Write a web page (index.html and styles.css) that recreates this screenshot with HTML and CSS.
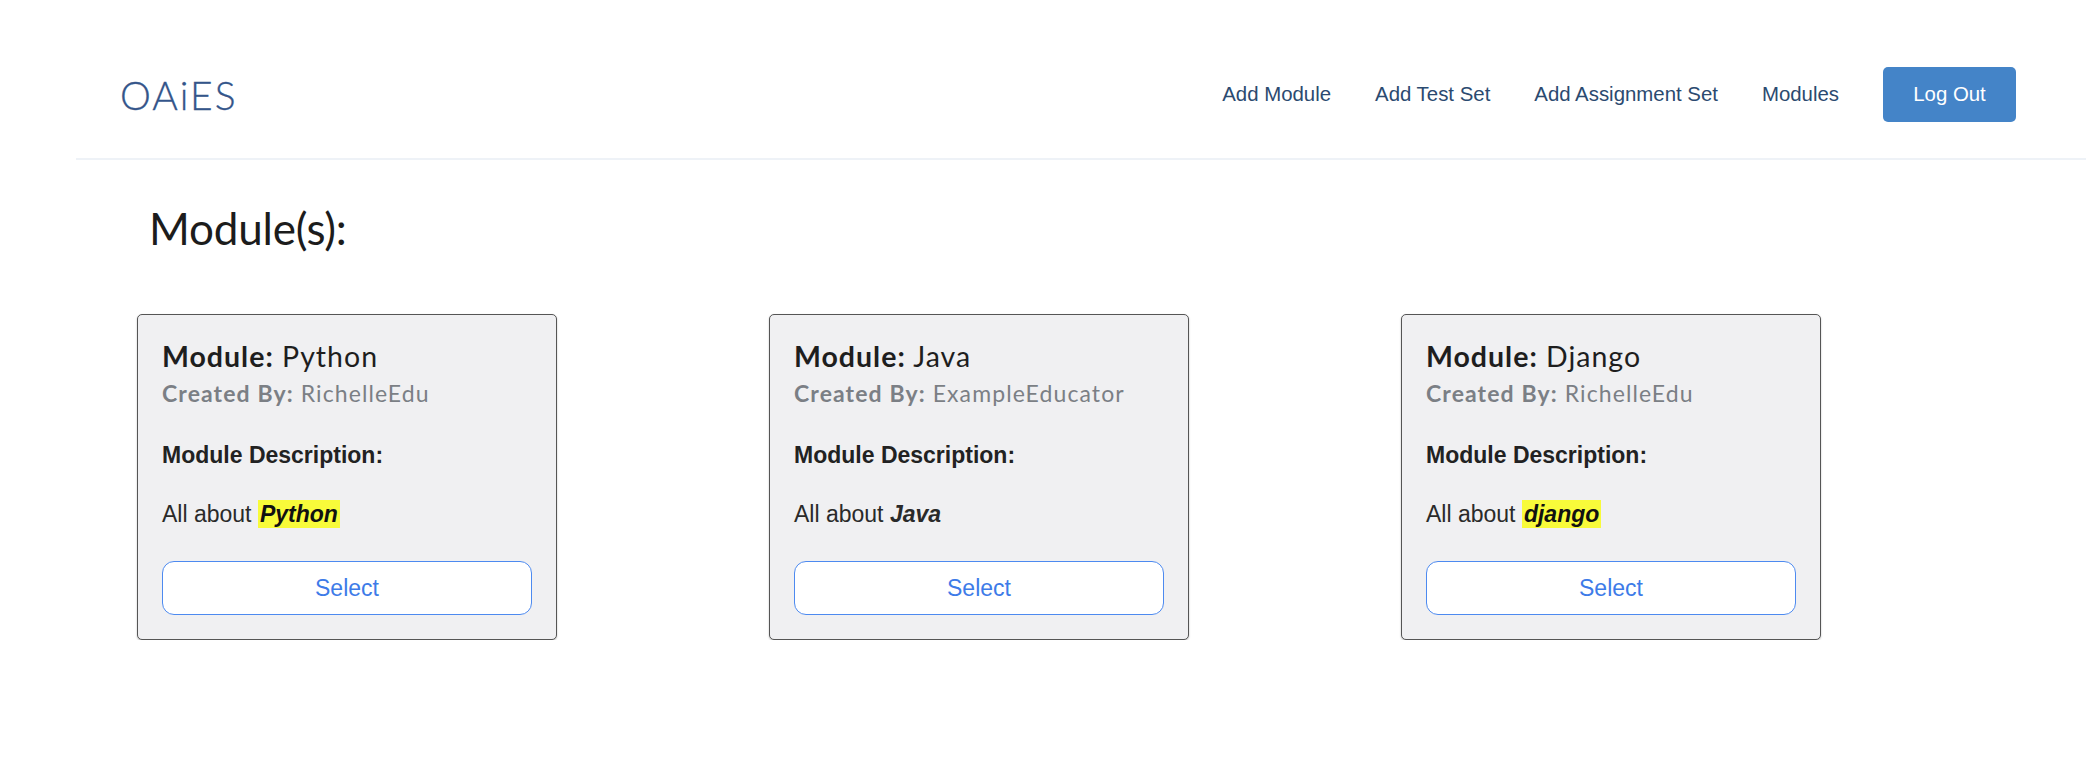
FILE: index.html
```html
<!DOCTYPE html>
<html lang="en">
<head>
<meta charset="utf-8">
<title>OAiES - Modules</title>
<link rel="stylesheet" href="styles.css">
</head>
<body>
<header class="topbar">
  <a class="brand" href="#">OAiES</a>
  <nav class="nav">
    <a class="nav-link" href="#">Add Module</a>
    <a class="nav-link" href="#">Add Test Set</a>
    <a class="nav-link" href="#">Add Assignment Set</a>
    <a class="nav-link" href="#">Modules</a>
    <button class="logout" type="button">Log Out</button>
  </nav>
</header>
<main class="main">
  <h2 class="page-title">Module(s):</h2>
  <div class="cards">
    <div class="card">
      <div class="card-title"><b>Module:</b> Python</div>
      <div class="card-sub"><b>Created By:</b> RichelleEdu</div>
      <div class="desc-label">Module Description:</div>
      <div class="desc">All about <mark class="hl"><b><i>Python</i></b></mark></div>
      <button class="select" type="button">Select</button>
    </div>
    <div class="card">
      <div class="card-title"><b>Module:</b> Java</div>
      <div class="card-sub"><b>Created By:</b> ExampleEducator</div>
      <div class="desc-label">Module Description:</div>
      <div class="desc">All about <b><i>Java</i></b></div>
      <button class="select" type="button">Select</button>
    </div>
    <div class="card">
      <div class="card-title"><b>Module:</b> Django</div>
      <div class="card-sub"><b>Created By:</b> RichelleEdu</div>
      <div class="desc-label">Module Description:</div>
      <div class="desc">All about <mark class="hl"><b><i>django</i></b></mark></div>
      <button class="select" type="button">Select</button>
    </div>
  </div>
</main>
</body>
</html>
```

FILE: styles.css
```css
* { box-sizing: border-box; }
html, body { margin: 0; padding: 0; background: #ffffff; }
body { font-family: "Liberation Sans", Arial, sans-serif; color: #222; }

.topbar {
  margin-left: 76px;
  height: 160px;
  padding: 31px 70px 0 44px;
  border-bottom: 2px solid #eef2f7;
  display: flex;
  align-items: center;
  justify-content: space-between;
}
.brand {
  font-family: Lato, "Open Sans", sans-serif;
  font-weight: 300;
  font-size: 39px;
  letter-spacing: 2px;
  color: #34558a;
  text-decoration: none;
  -webkit-text-stroke: 0.3px #34558a;
}
.nav { display: flex; align-items: center; gap: 44px; }
.nav-link {
  font-size: 20.4px;
  color: #2b4a70;
  text-decoration: none;
}
.logout {
  width: 133px;
  height: 55px;
  border: none;
  border-radius: 5px;
  background: #4484c8;
  color: #fff;
  font-family: "Liberation Sans", Arial, sans-serif;
  font-size: 20.4px;
}

.main { padding-left: 137px; }
.page-title {
  margin: 42px 0 0 12px;
  font-family: Lato, "Open Sans", sans-serif;
  font-weight: 400;
  font-size: 44px;
  line-height: 52px;
  letter-spacing: -0.2px;
  color: #1c1c1c;
}
.cards { display: flex; gap: 212px; margin-top: 60px; }
.card {
  width: 420px;
  background: #f0f0f2;
  border: 1px solid #555;
  border-radius: 5px;
  box-shadow: 0 1px 2px rgba(0,0,0,0.25);
  padding: 24px 24px 24px 24px;
  display: flex;
  flex-direction: column;
}
.card-title {
  font-family: Lato, "Open Sans", sans-serif;
  font-size: 28.5px;
  line-height: 34px;
  letter-spacing: 1px;
  color: #1e1e1e;
}
.card-title b { font-weight: 700; }
.card-sub {
  margin-top: 6px;
  font-family: Lato, "Open Sans", sans-serif;
  font-size: 23px;
  line-height: 28px;
  letter-spacing: 1.1px;
  color: #7b7f85;
}
.desc-label {
  margin-top: 35px;
  font-size: 23px;
  line-height: 26px;
  font-weight: 700;
  color: #222;
}
.desc {
  margin-top: 33px;
  font-size: 23px;
  line-height: 26px;
  color: #2a2a2a;
}
.hl { background: #f8fb3a; color: #111; padding: 1px 2px; }
.select {
  margin-top: 34px;
  height: 54px;
  width: 100%;
  background: #fff;
  border: 1.5px solid #4d8af0;
  border-radius: 12px;
  color: #3d7be8;
  font-family: "Liberation Sans", Arial, sans-serif;
  font-size: 23px;
}
```
